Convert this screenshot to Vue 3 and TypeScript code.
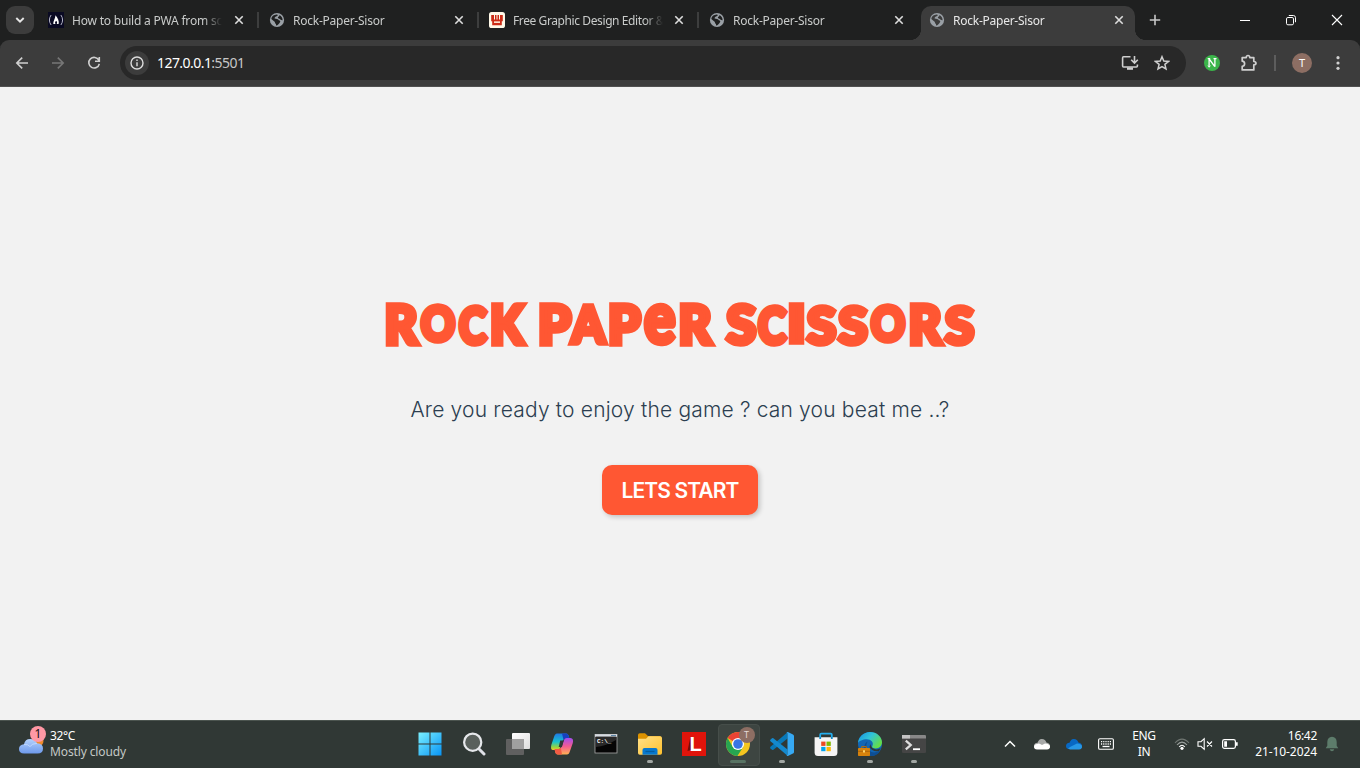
<script setup lang="ts">
interface Tab {
  title: string
  icon: 'camp' | 'globe' | 'design'
  active?: boolean
}

interface Glyph {
  ch: string
  x: number
  w: number
  y: number
  size: number
}

const tabs: Tab[] = [
  { title: 'How to build a PWA from scratch', icon: 'camp' },
  { title: 'Rock-Paper-Sisor', icon: 'globe' },
  { title: 'Free Graphic Design Editor & Tools', icon: 'design' },
  { title: 'Rock-Paper-Sisor', icon: 'globe' },
  { title: 'Rock-Paper-Sisor', icon: 'globe', active: true },
]

const heading: Glyph[] = [
  { ch: 'R', x: 0.5, w: 33, y: 43.5, size: 54 },
  { ch: 'O', x: 37, w: 34, y: 40.5, size: 47 },
  { ch: 'C', x: 75, w: 27.5, y: 43.5, size: 51 },
  { ch: 'K', x: 106, w: 33.5, y: 43.5, size: 53 },
  { ch: ' ', x: 141, w: 11, y: 43.5, size: 54 },
  { ch: 'P', x: 154, w: 33, y: 44, size: 54 },
  { ch: 'A', x: 187.5, w: 33.5, y: 42.5, size: 52 },
  { ch: 'P', x: 224, w: 32.5, y: 44, size: 53 },
  { ch: 'e', x: 260, w: 31.5, y: 43, size: 73 },
  { ch: 'R', x: 294.5, w: 33, y: 43.5, size: 54 },
  { ch: ' ', x: 329, w: 11, y: 43.5, size: 54 },
  { ch: 'S', x: 342.5, w: 29.5, y: 43.5, size: 52.5 },
  { ch: 'C', x: 374, w: 28, y: 43.5, size: 51 },
  { ch: 'I', x: 403.5, w: 18, y: 42, size: 51 },
  { ch: 'S', x: 423, w: 29, y: 43.5, size: 51.5 },
  { ch: 'S', x: 454.5, w: 29, y: 43.5, size: 51.5 },
  { ch: 'O', x: 487, w: 34, y: 40.5, size: 47 },
  { ch: 'R', x: 524.5, w: 33, y: 43.5, size: 54 },
  { ch: 'S', x: 561, w: 29, y: 43.5, size: 51.5 },
]
</script>

<template>
  <div class="screen">
    <header class="strip">
      <button class="tab-search" aria-label="Search tabs">
        <svg width="12" height="12" viewBox="0 0 12 12"><path d="M2.3 4 6 7.7 9.7 4" fill="none" stroke="#e6e6e6" stroke-width="1.9" /></svg>
      </button>
      <div class="tabs">
        <div v-for="(tab, i) in tabs" :key="i" class="tab" :class="[tab.icon, { active: tab.active, first: i === 0, divided: i < 3 }]">
          <svg v-if="tab.icon === 'camp'" class="favicon" viewBox="0 0 16 16">
            <rect width="16" height="16" fill="#0a0a23" />
            <path d="M3.1 3Q-.3 8 3.1 13M12.9 3Q16.3 8 12.9 13" fill="none" stroke="#b4b4c6" stroke-width="1" />
            <path d="M5.3 12C5 9.3 7.2 7 7.5 3.2 10 6 11.4 9.4 10.6 12L8.8 11.9Q9.8 9.5 8.1 8.7 6.3 10.2 7.4 12Z" fill="#fff" />
          </svg>
          <svg v-else-if="tab.icon === 'design'" class="favicon" viewBox="0 0 16 16">
            <rect width="16" height="16" rx="2.6" fill="#fff9e8" />
            <path d="M2.2 3H5V7.5H6V3H7.5V7.5H8.5V3H10V7.5H11V3H13.8V9.3H12.8V13.2H3.2V9.3H2.2Z" fill="#cc2b15" />
            <path d="M5 9.4H11V10.9H5Z" fill="#fff3df" />
          </svg>
          <svg v-else class="favicon" viewBox="0 0 16 16">
            <circle cx="8" cy="8" r="7.1" fill="#9aa0a6" />
            <path d="M7.6 2.5C9.2 2.3 9.2 3.6 7.6 4.2 6.6 4.7 5.6 5 5.6 6.4 7 7 9.6 6.7 9.8 8.3 11.2 8.5 11.6 9.3 11 10.2 10.2 11.5 9 13.3 7 13.6V11.8C6.2 11.8 5.8 11 5.9 9.9L2.3 7.1C2.5 4.5 4.6 2.6 7.6 2.5ZM10.4 2.9C12.5 3.9 13.7 6 13.6 8.2 12.3 8.5 11.5 7.6 10.4 6.8 9.2 6.5 8.4 5.8 9.2 4.8 10.1 4.5 10.4 3.8 10.4 2.9Z" :fill="tab.active ? '#3c3c3c' : '#1f2020'" />
          </svg>
          <span class="tab-title">{{ tab.title }}</span>
          <svg class="tab-close" viewBox="0 0 10 10"><path d="M1.3 1.3 8.7 8.7M8.7 1.3 1.3 8.7" stroke="#dedede" stroke-width="1.6" /></svg>
        </div>
      </div>
      <svg class="new-tab" width="12" height="12" viewBox="0 0 12 12"><path d="M6 .8V11.2M.8 6H11.2" stroke="#c7c7c7" stroke-width="1.6" /></svg>
      <div class="window-controls">
        <svg width="12" height="12" viewBox="0 0 12 12"><path d="M1 6.5H11" stroke="#fff" /></svg>
        <svg width="12" height="12" viewBox="0 0 12 12" fill="none" stroke="#fff"><rect x="1.5" y="3.5" width="7" height="7.3" rx="1.4" /><path d="M3.8 1.5H8.3Q10.5 1.5 10.5 3.7V8.2" /></svg>
        <svg width="12" height="12" viewBox="0 0 12 12"><path d="M1 1 11 11M11 1 1 11" stroke="#fff" stroke-width="1.1" /></svg>
      </div>
    </header>

    <div class="toolbar-frame">
      <div class="toolbar">
        <div class="nav">
          <svg width="16" height="16" viewBox="0 0 16 16" fill="none" stroke="#d0d0d0" stroke-width="1.6"><path d="M14 8H3M8.2 2.6 2.8 8 8.2 13.4" /></svg>
          <svg width="16" height="16" viewBox="0 0 16 16" fill="none" stroke="#777" stroke-width="1.6"><path d="M2 8H13M7.8 2.6 13.2 8 7.8 13.4" /></svg>
          <svg width="16" height="16" viewBox="0 0 16 16" fill="none" stroke="#d0d0d0" stroke-width="1.6"><path d="M12.8 5.2A5.3 5.3 0 1 0 13.3 8.8M13.3 2V6.3H9" /></svg>
        </div>
        <div class="omnibox">
          <span class="site-info">
            <svg width="14" height="14" viewBox="0 0 14 14"><circle cx="7" cy="7" r="6" fill="none" stroke="#dcdcdc" stroke-width="1.4" /><path d="M7 6.2V10.2M7 3.6V5" stroke="#dcdcdc" stroke-width="1.4" /></svg>
          </span>
          <span class="url"><b>127.0.0.1</b>:5501</span>
          <svg class="install" width="18" height="16" viewBox="0 0 18 16" fill="none" stroke="#cfcfcf" stroke-width="1.6"><path d="M9.5 1.8H2.5Q1.6 1.8 1.6 2.7V11Q1.6 12 2.5 12H15.5Q16.4 12 16.4 11V9.5M13.5 1V7.4M10.2 4.8 13.5 8.1 16.8 4.8" /><path d="M6 13.6H12" stroke-width="2.4" /></svg>
          <svg width="16" height="16" viewBox="0 0 16 16"><path d="M8 1.7 9.8 6 14.5 6.4 10.9 9.4 12 14 8 11.6 4 14 5.1 9.4 1.5 6.4 6.2 6Z" fill="none" stroke="#cfcfcf" stroke-width="1.5" /></svg>
        </div>
        <svg class="ext-n" width="16" height="16" viewBox="0 0 16 16"><circle cx="8" cy="8" r="8" fill="#3bb54a" /><path d="M3.7 3.6H6.2M5.1 3.7V10.5M5.2 4 10.8 11.6M10.9 4V11.7M9.5 3.6H12.5" stroke="#fff" stroke-width="1.3" /><path d="M3.4 10.4 5.1 12.7 6.9 10.6" fill="#fff" /></svg>
        <svg class="puzzle" width="18" height="18" viewBox="0 0 18 18"><path d="M2.2 3.6H6.2Q6.4 1.5 8 1.5T9.8 3.6H13.8V7.5Q16 7.6 16 9.2T13.8 10.9V15.9H2.2V12.4Q4.6 12.1 4.6 9.8T2.2 7.2Z" fill="none" stroke="#cfcfcf" stroke-width="1.7" stroke-linejoin="round" /></svg>
        <i class="bar"></i>
        <span class="avatar">T</span>
        <svg class="menu-dots" width="4" height="16" viewBox="0 0 4 16" fill="#d0d0d0"><circle cx="2" cy="2.7" r="1.6" /><circle cx="2" cy="8" r="1.6" /><circle cx="2" cy="13.3" r="1.6" /></svg>
      </div>
    </div>

    <main class="page">
      <h1>
        <svg width="592" height="54" viewBox="0 0 592 54">
          <text class="heading-text"><tspan v-for="(g, i) in heading" :key="i" :x="g.x" :y="g.y" :font-size="g.size" :textLength="g.w" lengthAdjust="spacingAndGlyphs">{{ g.ch }}</tspan></text>
        </svg>
      </h1>
      <p>Are you ready to enjoy the game ? can you beat me ..?</p>
      <button class="start">LETS START</button>
    </main>

    <footer class="taskbar">
      <div class="weather">
        <svg width="30" height="32" viewBox="0 0 30 32">
          <defs><linearGradient id="cloud" x2="0" y2="1"><stop stop-color="#b4d2fc" /><stop offset="1" stop-color="#6d99eb" /></linearGradient></defs>
          <circle cx="20" cy="16" r="5.5" fill="#f08b2c" />
          <path d="M6 28.5Q1 28.3 1 24T6 19.3Q7 14 12.2 14T19 18.3Q25 18.5 25 23.5T19.5 28.5Z" fill="url(#cloud)" />
          <path d="M6 19.5Q10 19 12 21.5 14 18.5 19 18.3" fill="none" stroke="#d0e2ff" stroke-width=".7" />
          <circle cx="20" cy="9" r="8" fill="#ff98a5" />
          <text x="20" y="13.2" text-anchor="middle" class="badge-text">1</text>
        </svg>
        <div class="weather-text"><span>32°C</span><small>Mostly cloudy</small></div>
      </div>

      <nav class="apps">
        <div class="app">
          <svg width="24" height="24" viewBox="0 0 24 24"><defs><linearGradient id="win" x2="1" y2="1"><stop stop-color="#7af0ff" /><stop offset="1" stop-color="#0794f5" /></linearGradient></defs><path d="M.5.5H11.5V11.5H.5ZM12.5.5H23.5V11.5H12.5ZM.5 12.5H11.5V23.5H.5ZM12.5 12.5H23.5V23.5H12.5Z" fill="url(#win)" /></svg>
        </div>
        <div class="app">
          <svg width="24" height="24" viewBox="0 0 24 24"><path d="M17.3 17.3 22 22" stroke="#dfe1e8" stroke-width="3" stroke-linecap="round" /><circle cx="10.7" cy="10.2" r="8.6" fill="#59605c" stroke="#e6e8eb" stroke-width="2.2" /></svg>
        </div>
        <div class="app">
          <svg width="24" height="24" viewBox="0 0 24 24"><defs><linearGradient id="front" x2="1" y2="1"><stop stop-color="#fff" /><stop offset="1" stop-color="#ddd" /></linearGradient></defs><rect x="6" y="1" width="18" height="16" rx="1" fill="url(#front)" /><rect y="7" width="18" height="16" rx="1" fill="#606060" /><path d="M6 7H18V17H6Z" fill="#a0a0a0" /></svg>
        </div>
        <div class="app">
          <svg width="24" height="24" viewBox="0 0 24 24">
            <defs>
              <linearGradient id="copA" x2="0" y2="1"><stop stop-color="#2178e5" /><stop offset=".5" stop-color="#17c3d1" /><stop offset=".8" stop-color="#90d446" /><stop offset="1" stop-color="#f7ca26" /></linearGradient>
              <linearGradient id="copB" x2="0" y2="1"><stop stop-color="#a24df0" /><stop offset=".5" stop-color="#f35b91" /><stop offset="1" stop-color="#ffb252" /></linearGradient>
            </defs>
            <path d="M7 1.5H16Q18.4 1.5 19 5L19.5 7H15Q13 7 12 10L10 16Q9 19 7 18H3Q.2 18 1.3 13L4 5Q5 1.5 7 1.5Z" fill="url(#copA)" />
            <path d="M12 1.5H16Q18.4 1.5 19 5L19.5 7H15Q14 7 13.5 8Z" fill="#1740c0" />
            <path d="M17 22.5H8Q5.5 22.5 5 19L4.5 17H9Q11 17 12 14L14 8Q15 5.8 17 6H20.5Q24 6.5 22.8 11L20 19Q19 22.5 17 22.5Z" fill="url(#copB)" />
            <path d="M10.2 8.6H13.7L11.9 15H8.7Z" fill="#303936" />
            <path d="M12 22.5H8Q5.5 22.5 5 19L4.5 17H9Q10 17 10.8 15.6Z" fill="#f25b44" />
          </svg>
        </div>
        <div class="app">
          <svg width="24" height="24" viewBox="0 0 24 24"><rect x="1" y="2.5" width="22" height="18.5" fill="#050505" stroke="#a9a9a9" stroke-width=".8" /><path d="M1 2.2H23V4.8H1Z" fill="#d7dce2" /><path d="M17 3.5H22" stroke="#5d85a6" stroke-width="1" /><path d="M2 15Q12 14 22 8V4.8H2Z" fill="#292929" /><text x="3" y="11.3" class="cmd-text">C:\_</text></svg>
        </div>
        <div class="app running">
          <svg width="24" height="24" viewBox="0 0 24 24"><defs><linearGradient id="folder" x2="1" y2="1"><stop stop-color="#ffe18a" /><stop offset="1" stop-color="#ffc12d" /></linearGradient></defs><path d="M0 3Q0 1.2 1.8 1.2H7L10 4H22.5V13H0Z" fill="#dc9200" /><path d="M0 6.8H8L10.5 4.2H22.2Q24 4.2 24 6V21Q24 22.7 22.2 22.7H1.8Q0 22.7 0 21Z" fill="url(#folder)" /><path d="M4.5 22.7V18Q4.5 16 6.5 16H17.5Q19.5 16 19.5 18V22.7Z" fill="#0878ce" /><path d="M7.5 19.5H16.5" stroke="#055d9e" stroke-width="1.3" /></svg>
        </div>
        <div class="app">
          <svg width="24" height="24" viewBox="0 0 24 24"><path d="M0 0H24V24H0Z" fill="#e0140b" /><path d="M8.5 4.5 5.5 19 9 18Z" fill="#720d09" /><text x="7.5" y="18.5" class="l-text">L</text></svg>
        </div>
        <div class="app chrome">
          <svg width="26" height="26" viewBox="0 0 26 26"><circle cx="13" cy="13" r="12" fill="#f5c51f" /><path d="M13 13 2.6 7A12 12 0 0 1 23.4 7Z" fill="#e94335" /><path d="M2.6 7A12 12 0 0 0 12.4 25L18.2 16 13 13 7.8 16Z" fill="#27a551" /><circle cx="13" cy="13" r="6.1" fill="#fff" /><circle cx="13" cy="13" r="4.8" fill="#3975e5" /></svg>
          <span class="profile">T</span>
        </div>
        <div class="app running">
          <svg width="24" height="24" viewBox="0 0 24 24"><path d="M17.5.2V6.5L3.4 17.7Q2.6 18.2 2 17.7L.4 16.2Q-.2 15.5.5 14.8Z" fill="#0878b8" /><path d="M17.5 23.8V17.5L3.4 6.3Q2.6 5.8 2 6.3L.4 7.8Q-.2 8.5.5 9.2Z" fill="#1489ce" /><path d="M16 .8Q17.1-.3 18.4.3L23 2.5Q24 3 24 4V20Q24 21 23 21.5L18.4 23.7Q17.1 24.3 16 23.2 17.5 24 17.5 22V2Q17.5 0 16 .8Z" fill="#36a9f3" /></svg>
        </div>
        <div class="app">
          <svg width="24" height="24" viewBox="0 0 24 24"><path d="M6.2 7V2.7Q6.2 1.6 7.3 1.6H16.7Q17.8 1.6 17.8 2.7V7" fill="none" stroke="#24aeee" stroke-width="1.8" /><path d="M.6 5.2H23.4V20.5Q23.4 24 20 24H4Q.6 24 .6 20.5Z" fill="#f5f5f5" /><path d="M6.2 5V7M17.8 5V7" stroke="#168bc7" stroke-width="1.8" /><path d="M7.2 9.6H11.5V13.9H7.2Z" fill="#ed4a22" /><path d="M12.5 9.6H16.8V13.9H12.5Z" fill="#80b903" /><path d="M7.2 14.9H11.5V19.2H7.2Z" fill="#02a3ed" /><path d="M12.5 14.9H16.8V19.2H12.5Z" fill="#ffb705" /></svg>
        </div>
        <div class="app running">
          <svg width="24" height="24" viewBox="0 0 24 24"><defs><linearGradient id="edge" x2="1" y2=".6"><stop stop-color="#158ee0" /><stop offset=".5" stop-color="#31c4d8" /><stop offset="1" stop-color="#64dd48" /></linearGradient></defs><circle cx="12" cy="12" r="12" fill="#1266b4" /><path d="M0 11C.4 5 5.5 0 12 0 19 0 24 5 24 10.2 24 14 21 16.4 17.7 16.4 14.5 16.4 13.5 15 14.5 13.5 16 10.5 13 7.2 8.8 7.2 4.5 7.2 1 9 0 11Z" fill="url(#edge)" /><path d="M9.5 9.5Q6 16 13.5 20 18 21.5 22.5 18 20 24 13 24 6 23 6.2 15.8 6.5 11 9.5 9.5Z" fill="#0d4e94" /><path d="M12.5 12Q13 17.5 19 17.4L22.7 16.2 21 19Q14 20 11.5 15Z" fill="#303936" /><rect y="16" width="12" height="8" rx=".7" fill="#d7820b" /><path d="M3.7 16V14.6H8.3V16" fill="none" stroke="#b86c08" stroke-width="1" /><path d="M0 19.3H12" stroke="#a4600a" stroke-width=".8" /><path d="M5 18.3H7V20.6H5Z" fill="#ffd46a" /></svg>
        </div>
        <div class="app running">
          <svg width="24" height="24" viewBox="0 0 24 24"><rect y="3" width="24" height="18" rx="1.2" fill="#454545" /><path d="M0 6.5V4.2Q0 3 1.2 3H22.8Q24 3 24 4.2V6.5Z" fill="#888" /><path d="M0 3H8V6.5H0Z" fill="#c4c4c4" /><path d="M3.8 8.7 8.7 13 3.8 17.3" fill="none" stroke="#dedede" stroke-width="2.3" /><path d="M11 17.2H18" stroke="#fff" stroke-width="1.8" /></svg>
        </div>
      </nav>

      <div class="tray">
        <svg class="chevron" width="12" height="12" viewBox="0 0 12 12"><path d="M1 8.5 6 3.5 11 8.5" fill="none" stroke="#fff" stroke-width="1.5" /></svg>
        <svg class="cloud-grey" width="18" height="12" viewBox="0 0 18 12"><path d="M4 11Q1 11 1 8T4.5 4.8Q6 .5 9 1 12.4 1 13.4 4.5 17 5 17 8T14 11Z" fill="#a7a9a8" /><path d="M4 11.5Q1 11.3 1 8.8T4.2 6Q6 4.5 9 7L12 5.5Q16.8 5.8 17 8.5T14 11.5Z" fill="#fff" /></svg>
        <svg class="cloud-blue" width="18" height="12" viewBox="0 0 18 12"><path d="M4 11Q1 11 1 8T4.5 4.8Q6 .5 9 1 12.4 1 13.4 4.5 17 5 17 8T14 11Z" fill="#0868c3" /><path d="M3 10.5Q5 8.5 9 7L12 5.5Q16.8 5.8 17 8.5T14 11.5H5Z" fill="#2797e5" /></svg>
        <svg class="keyboard" width="16" height="12" viewBox="0 0 16 12"><rect x=".6" y=".8" width="14.8" height="10.4" rx="1.3" fill="none" stroke="#fff" stroke-width="1.1" /><path d="M3 3.7H13M3 6H13" stroke="#fff" stroke-width="1.3" stroke-dasharray="1.2 1" /><path d="M4.5 8.5H11.5" stroke="#fff" stroke-width="1.3" /></svg>
        <div class="lang"><span>ENG</span><span>IN</span></div>
        <svg class="wifi" width="16" height="14" viewBox="0 0 16 14" fill="none"><path d="M1 6Q8-1.8 15 6" stroke="#707773" stroke-width="1.1" /><path d="M3 8Q8 2.2 13 8" stroke="#9ca19f" stroke-width="1.1" /><path d="M5.2 10Q8 6.5 10.8 10" stroke="#fff" stroke-width="1.1" /><circle cx="8" cy="11.3" r="1.6" fill="#fff" /></svg>
        <svg class="mute" width="16" height="14" viewBox="0 0 16 14" fill="none" stroke="#fff" stroke-width="1.1"><path d="M7.2 1.7V12.3L4 9.3H1V4.7H4ZM10 4.5 15 9.5M15 4.5 10 9.5" /></svg>
        <svg class="battery" width="16" height="12" viewBox="0 0 16 12"><rect x=".6" y="1.6" width="12.8" height="8.8" rx="1.8" fill="none" stroke="#fff" stroke-width="1.2" /><path d="M2.2 3.3H5V8.7H2.2ZM14 4.2H15.7V7.8H14Z" fill="#fff" /></svg>
        <div class="clock"><span>16:42</span><span class="date">21-10-2024</span></div>
        <svg class="bell" width="14" height="16" viewBox="0 0 14 16"><path d="M7 .7Q11.5 1 11.7 6V9.7L13.3 12.2H.7L2.3 9.7V6Q2.5 1 7 .7ZM4.7 13.2H9.3Q8.7 15.2 7 15.2T4.7 13.2Z" fill="#5d7c6b" /></svg>
      </div>
    </footer>
  </div>
</template>

<style>
body { margin: 0; overflow: hidden; }
</style>

<style scoped>
* { box-sizing: border-box; }
.screen { width: 1360px; height: 768px; display: flex; flex-direction: column; background: #f2f2f2; font-family: "Noto Sans", "Open Sans", sans-serif; overflow: hidden; }
button { border: 0; padding: 0; }
svg { display: block; flex: none; }

.strip { height: 40px; background: #1f2020; display: flex; align-items: center; padding-left: 6px; }
.tab-search { width: 28px; height: 28px; margin-right: 6px; border-radius: 9px; background: #3c3c3c; display: grid; place-items: center; }
.tabs { display: flex; height: 40px; }
.tab { width: 220px; height: 40px; padding-left: 9px; display: flex; align-items: center; position: relative; color: #c9cbca; }
.tab.first { padding-left: 8px; }
.tab.first .tab-close { margin-left: 12px; }
.tab.divided::after { content: ""; position: absolute; right: 1px; top: 12px; width: 2px; height: 16px; background: #3d3e3e; }
.favicon { width: 16px; height: 16px; }
.tab-title { margin-left: 8px; width: 150px; padding-top: 2px; overflow: hidden; white-space: nowrap; font-size: 12px; line-height: 18px; letter-spacing: -0.25px; mask-image: linear-gradient(90deg, #000 132px, transparent 150px); }
.camp .tab-title { letter-spacing: -0.2px; }
.design .tab-title { letter-spacing: -0.4px; }
.tab-close { width: 10px; height: 10px; margin-left: 11px; }
.tab.active { color: #e8e8e8; }
.tab.active::before { content: ""; position: absolute; left: 1px; top: 6px; width: 214px; height: 34px; border-radius: 10px 10px 0 0; background: #3c3c3c; }
.tab.active::after { content: ""; position: absolute; left: -9px; bottom: 0; width: 234px; height: 10px; background: radial-gradient(circle at 0 0, transparent 9.6px, #3c3c3c 10px) left / 10px 10px no-repeat, radial-gradient(circle at 10px 0, transparent 9.6px, #3c3c3c 10px) right / 10px 10px no-repeat; }
.tab.active > * { position: relative; }
.new-tab { margin-left: 9px; }
.window-controls { margin-left: auto; display: flex; gap: 34px; padding-right: 17px; }

.toolbar-frame { background: #1f2020; }
.toolbar { height: 47px; background: #3c3c3c; box-shadow: inset 0 -1px #505050; border-radius: 9px 9px 0 0; display: flex; align-items: center; padding: 0 0 1px 14px; }
.nav { display: flex; gap: 20px; margin-right: 18px; }
.omnibox { width: 1066px; height: 34px; border-radius: 17px; background: #282828; display: flex; align-items: center; padding-left: 5px; }
.site-info { width: 24px; height: 24px; border-radius: 50%; background: #3c3c3c; display: grid; place-items: center; margin-right: 8px; }
.url { font-size: 14px; line-height: 20px; color: #c7c7c7; letter-spacing: -0.55px; }
.url b { font-weight: 400; color: #fff; }
.install { margin-left: auto; margin-right: 15px; }
.omnibox > svg:last-child { margin-right: 16px; }
.ext-n { margin-left: 18px; }
.puzzle { margin-left: 20px; }
.bar { width: 2px; height: 16px; background: #5d5d5d; margin-left: 16px; }
.avatar { width: 20px; height: 20px; margin-left: 16px; border-radius: 50%; background: #8d6e63; color: #fff; display: grid; place-items: center; font-size: 11px; line-height: 20px; }
.menu-dots { margin-left: 24px; }

.page { height: 633px; background: #f2f2f2; display: flex; flex-direction: column; align-items: center; }
h1 { margin: 213px 0 0; height: 54px; }
h1 svg { overflow: visible; }
.heading-text { font-family: Lato, sans-serif; font-weight: 900; fill: #ff5733; stroke: #ff5733; stroke-width: 5.6px; stroke-linejoin: miter; stroke-miterlimit: 3; }
.page p { margin: 41px 0 0; font-family: Inter, sans-serif; font-weight: 300; font-size: 21px; line-height: 30px; letter-spacing: 0.18px; color: #2c3e50; white-space: nowrap; }
.start { margin-top: 40px; width: 156px; height: 50px; border-radius: 10px; background: #ff5733; color: #fff; font-family: Inter, sans-serif; font-weight: 600; font-size: 21px; letter-spacing: -0.9px; box-shadow: 2px 2px 5px rgba(0, 0, 0, 0.2); white-space: nowrap; }

.taskbar { height: 48px; background: #303835; border-top: 1px solid #4b544f; display: grid; grid-template-columns: 407.5px 528px 1fr; align-items: center; color: #fff; }
.weather { display: flex; align-items: center; padding-left: 18px; height: 47px; }
.weather > svg { margin-top: -7px; }
.badge-text { font: 12px "Noto Sans", sans-serif; fill: #111; }
.weather-text { margin: -2px 0 0 2px; display: flex; flex-direction: column; font-size: 12px; line-height: 16px; letter-spacing: -0.35px; }
.weather-text small { font-size: 12px; color: #c4c8c6; letter-spacing: -0.13px; }
.apps { display: flex; height: 47px; }
.app { width: 44px; height: 47px; padding-bottom: 2px; display: grid; place-items: center; position: relative; }
.running::after { content: ""; position: absolute; left: 19px; bottom: 5px; width: 6px; height: 3px; border-radius: 2px; background: #a1a6a3; }
.chrome::before { content: ""; position: absolute; left: 2px; top: 3px; width: 40px; height: 40px; border-radius: 4px; background: #3d4541; border: 1px solid #464e4a; }
.chrome::after { content: ""; position: absolute; left: 14px; bottom: 5px; width: 16px; height: 3px; border-radius: 2px; background: #587363; }
.chrome svg { position: relative; }
.profile { position: absolute; left: 23px; top: 6px; width: 16px; height: 16px; border-radius: 50%; background: #8d6e63; color: #e4dad6; font-size: 9px; line-height: 16px; text-align: center; }
.cmd-text { font: bold 6px "Liberation Mono", monospace; fill: #fff; }
.l-text { font: bold 20px "Liberation Sans", sans-serif; fill: #fff; }
.tray { display: flex; align-items: center; padding: 0 0 2px 68.5px; font-size: 12px; }
.cloud-grey { margin-left: 17px; }
.cloud-blue { margin-left: 14px; }
.keyboard { margin-left: 15px; }
.lang { width: 30px; margin-left: 15px; display: flex; flex-direction: column; align-items: center; line-height: 16px; letter-spacing: -0.4px; }
.wifi { margin-left: 15px; }
.mute { margin-left: 7px; }
.battery { margin-left: 9px; }
.clock { width: 76px; margin-left: 3px; display: flex; flex-direction: column; align-items: flex-end; line-height: 16px; letter-spacing: -0.3px; white-space: nowrap; }
.date { letter-spacing: -0.08px; }
.bell { margin-left: 8px; }
</style>
